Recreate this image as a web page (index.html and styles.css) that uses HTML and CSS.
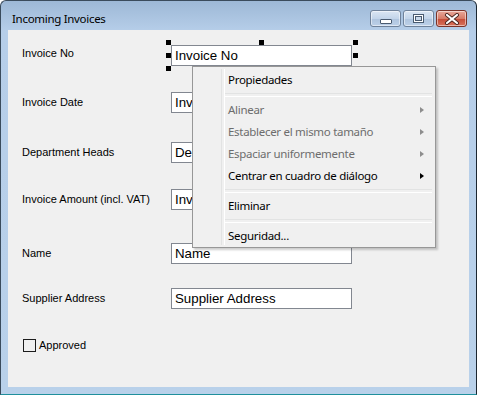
FILE: index.html
```html
<!DOCTYPE html>
<html lang="en">
  <head>
    <meta charset="UTF-8" />
    <title>Incoming Invoices</title>
    <link rel="stylesheet" href="styles.css">
  </head>
  <body>
    <div class="window">
      <div class="titlebar">
        <span class="title">Incoming Invoices</span>
        <div class="caption-buttons">
          <div class="cap-btn">
            <span class="min-glyph"></span>
          </div>
          <div class="cap-btn">
            <span class="max-glyph"></span>
          </div>
          <div class="cap-btn close">
            <svg width="16" height="12" viewBox="0 0 16 12">
              <path d="M3 2 L13 10 M13 2 L3 10" stroke="#4a2620" stroke-width="4" stroke-linecap="round" />
              <path d="M3 2 L13 10 M13 2 L3 10" stroke="#ffffff" stroke-width="2.2" stroke-linecap="round" />
            </svg>
          </div>
        </div>
      </div>

      <div class="client">
        <div class="form">
          <div class="field-label first">Invoice No</div>
          <div class="textbox selected">
            Invoice No
            <span class="handle h-tl"></span>
            <span class="handle h-tm"></span>
            <span class="handle h-tr"></span>
            <span class="handle h-ml"></span>
            <span class="handle h-mr"></span>
            <span class="handle h-bl"></span>
          </div>

          <div class="field-label">Invoice Date</div>
          <div class="textbox clipped">Inv</div>

          <div class="field-label">Department Heads</div>
          <div class="textbox clipped">De</div>

          <div class="field-label">Invoice Amount (incl. VAT)</div>
          <div class="textbox clipped">Inv</div>

          <div class="field-label">Name</div>
          <div class="textbox">Name</div>

          <div class="field-label">Supplier Address</div>
          <div class="textbox">Supplier Address</div>

          <div class="check-row">
            <span class="checkbox"></span>Approved
          </div>
        </div>

        <div class="context-menu">
          <div class="menu-item">Propiedades</div>
          <div class="menu-sep"></div>
          <div class="menu-item disabled">Alinear<span class="arrow"></span></div>
          <div class="menu-item disabled">Establecer el mismo tamaño<span class="arrow"></span></div>
          <div class="menu-item disabled">Espaciar uniformemente<span class="arrow"></span></div>
          <div class="menu-item">Centrar en cuadro de diálogo<span class="arrow"></span></div>
          <div class="menu-sep"></div>
          <div class="menu-item">Eliminar</div>
          <div class="menu-sep"></div>
          <div class="menu-item">Seguridad...</div>
        </div>
      </div>
    </div>
  </body>
</html>
```

FILE: styles.css
```css
* {
  margin: 0;
  padding: 0;
  box-sizing: border-box;
}

body {
  background: #ffffff;
  font-family: "Liberation Sans", Arial, sans-serif;
  color: #000000;
}

.window {
  width: 477px;
  height: 395px;
  border: 1px solid #3a4b5c;
  border-bottom-color: #1f8f9c;
  border-right-color: #1b2630;
  border-radius: 6px 6px 0 0;
  background: linear-gradient(#9db8d6, #b6cee9 30px, #b9d1ea);
  display: flex;
  flex-direction: column;
}

.titlebar {
  height: 29px;
  display: flex;
  align-items: center;
  justify-content: space-between;
  padding: 6px 9px 0 11px;
}

.title {
  font-family: "Noto Sans", "Segoe UI", sans-serif;
  font-size: 11.5px;
  letter-spacing: -0.3px;
  color: #000000;
}

.caption-buttons {
  display: flex;
  gap: 2px;
}

.cap-btn {
  width: 31px;
  height: 17px;
  border: 1px solid #6f829a;
  border-radius: 3px;
  background: linear-gradient(#dbe6f3, #c3d5ea 50%, #aec4de 51%, #bcd0e8);
  box-shadow: inset 0 0 0 1px rgba(255, 255, 255, 0.5);
  display: flex;
  align-items: center;
  justify-content: center;
}

.cap-btn.close {
  border-color: #7b3328;
  background: linear-gradient(#e9a99b, #d77c69 50%, #c54b36 51%, #d8725c);
}

.min-glyph {
  width: 12px;
  height: 5px;
  margin-top: 5px;
  background: #ffffff;
  border: 1px solid #4a5b70;
  border-radius: 1px;
}

.max-glyph {
  width: 11px;
  height: 9px;
  border: 1px solid #4a5b70;
  background: #c9d8ea;
  box-shadow: inset 0 0 0 1px #ffffff, inset 0 0 0 2px #4a5b70;
}

.client {
  position: relative;
  flex: 1;
  margin: 0 7px 7px;
  background: #f0f0f0;
}

.form {
  display: grid;
  grid-template-columns: 149px 181px;
  grid-template-rows: 47px 50px 47px 54px 45px 45px 24px;
  align-items: start;
  padding: 15px 0 0 14px;
}

.field-label {
  font-size: 11px;
  line-height: 21px;
}

.field-label.first {
  line-height: 17px;
}

.textbox {
  position: relative;
  height: 21px;
  border: 1px solid #828790;
  background: #ffffff;
  font-size: 13.3px;
  line-height: 19px;
  padding-left: 3px;
  white-space: nowrap;
}

.handle {
  position: absolute;
  width: 5px;
  height: 5px;
  background: #000000;
}

.h-tl { left: -6px; top: -6px; }
.h-tm { left: 87px; top: -6px; }
.h-tr { right: -7px; top: -6px; }
.h-ml { left: -6px; top: 7px; }
.h-mr { right: -7px; top: 7px; }
.h-bl { left: -6px; bottom: -6px; }

.check-row {
  grid-column: 1 / 3;
  height: 24px;
  display: flex;
  align-items: center;
  font-size: 11px;
  margin-left: 1px;
}

.checkbox {
  width: 13px;
  height: 13px;
  border: 1px solid #1c1c1c;
  margin-right: 3px;
}

.context-menu {
  position: absolute;
  left: 184px;
  top: 36px;
  width: 244px;
  height: 182px;
  border: 1px solid #979797;
  background: #f0f0f0;
  padding: 2px 2px 0;
  font-family: "Noto Sans", "Segoe UI", sans-serif;
  font-size: 11.5px;
  letter-spacing: -0.3px;
  box-shadow: 2px 2px 2px rgba(0, 0, 0, 0.2);
}

.context-menu::before {
  content: "";
  position: absolute;
  left: 28px;
  top: 2px;
  bottom: 2px;
  width: 2px;
  border-left: 1px solid #e2e3e3;
  border-right: 1px solid #ffffff;
}

.menu-item {
  position: relative;
  height: 22px;
  line-height: 22px;
  padding-left: 33px;
  white-space: nowrap;
}

.menu-item.disabled {
  color: #6d6d6d;
}

.arrow {
  position: absolute;
  right: 9px;
  top: 8px;
  border-left: 4px solid #000000;
  border-top: 3.5px solid transparent;
  border-bottom: 3.5px solid transparent;
}

.menu-item.disabled .arrow {
  border-left-color: #8d8d8d;
}

.menu-sep {
  height: 8px;
  margin-left: 29px;
  margin-right: 1px;
  display: flex;
  align-items: center;
}

.menu-sep::after {
  content: "";
  flex: 1;
  height: 2px;
  border-top: 1px solid #e2e3e3;
  border-bottom: 1px solid #ffffff;
}
```
